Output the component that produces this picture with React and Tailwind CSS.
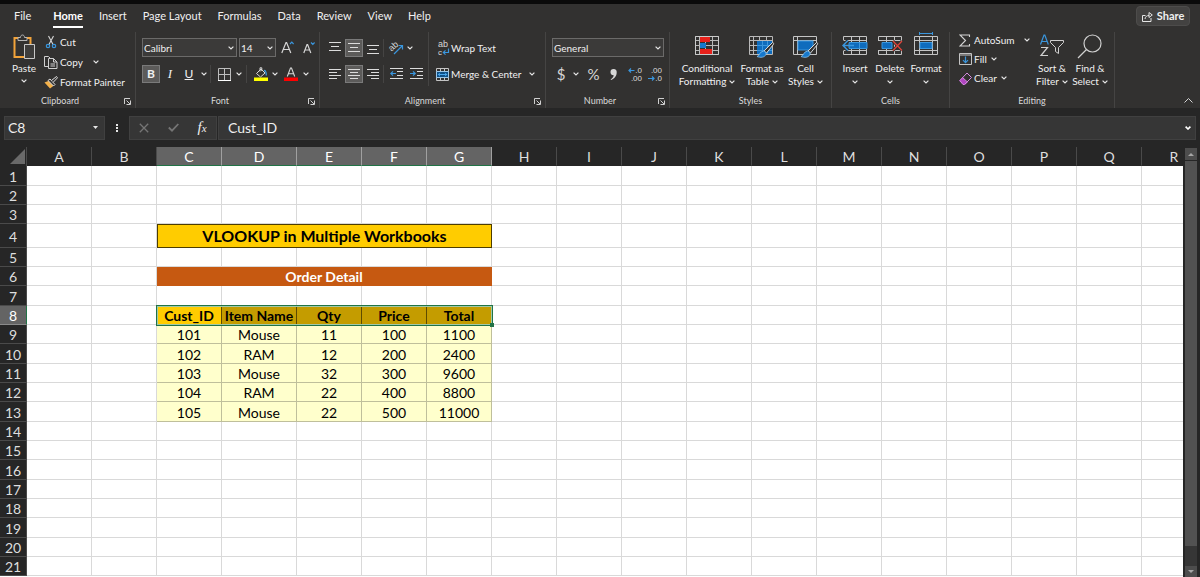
import clsx from 'clsx';

const tabs = ['File', 'Home', 'Insert', 'Page Layout', 'Formulas', 'Data', 'Review', 'View', 'Help'];

const columns = 'ABCDEFGHIJKLMNOPQR'.split('');
const rows = Array.from({ length: 21 }, (_, i) => i + 1);
const selectedColumns = ['C', 'D', 'E', 'F', 'G'];

const headings = ['Cust_ID', 'Item Name', 'Qty', 'Price', 'Total'];
const orders = [
  [101, 'Mouse', 11, 100, 1100],
  [102, 'RAM', 12, 200, 2400],
  [103, 'Mouse', 32, 300, 9600],
  [104, 'RAM', 22, 400, 8800],
  [105, 'Mouse', 22, 500, 11000],
];

/* ---------- icons ---------- */

const Chevron = ({ className }) => (
  <svg viewBox="0 0 6 4" className={clsx('h-1 w-1.5 shrink-0', className)} fill="none" stroke="#e6e6e6" strokeWidth="1.2">
    <path d="M.6.6 3 3 5.4.6" />
  </svg>
);

const Launcher = () => (
  <svg viewBox="0 0 7 7" className="h-[7px] w-[7px]" fill="none" stroke="#d0d0d0">
    <path d="M.5 6V.5H6M2.5 2.5l3.5 3.5M6.5 2.5v4h-4" />
  </svg>
);

const PasteIcon = () => (
  <svg viewBox="0 0 24 26" className="h-[26px] w-6" fill="none">
    <path d="M6 4H2.500v19H12M15 4h3.500v6" stroke="#f2a33a" strokeWidth="2" />
    <path d="M6 6.500V3.500h2.500C8.500 1.800 9.500 1 10.500 1s2 .8 2 2.500H15v3z" fill="#323130" stroke="#b5b5b5" />
    <path d="M12.500 10.500h10v14h-10z" fill="#3d3c3b" stroke="#c8c8c8" />
  </svg>
);

const CutIcon = () => (
  <svg viewBox="0 0 14 14" className="h-3.5 w-3.5" fill="none">
    <path d="M4.500 1l4.800 9M9.500 1L4.700 10" stroke="#d6d6d6" strokeWidth="1.100" />
    <circle cx="4" cy="11" r="1.700" stroke="#3a96dd" strokeWidth="1.200" />
    <circle cx="10" cy="11" r="1.700" stroke="#3a96dd" strokeWidth="1.200" />
  </svg>
);

const CopyIcon = () => (
  <svg viewBox="0 0 14 14" className="h-3.5 w-3.5" fill="none" stroke="#d0d0d0">
    <path d="M4.500 11.500h-4V1.500h4l2 2M4.500 3.500h5l3.500 3.500v6.500H4.500zM9.500 3.500V7H13M6.500 9h4.500M6.500 11h4.500" />
  </svg>
);

const PainterIcon = () => (
  <svg viewBox="0 0 14 13" className="h-[13px] w-3.5">
    <path d="M.5 6.500l5-2 4.500 5-4 3z" fill="#f2b04a" />
    <path d="M4 4.500l2-1.500 5 5.500-1.500 1.500z" fill="#323130" stroke="#dedede" />
    <path d="M7.500 4.500L12.500.5l1 1.300-4.300 4.500" fill="#323130" stroke="#dedede" />
  </svg>
);

const BordersIcon = () => (
  <svg viewBox="0 0 13 13" className="h-[13px] w-[13px]" fill="none">
    <path d="M.5.5h12v12M.5.5v12M6.500 1v11M1 6.500h11" stroke="#bdbdbd" />
    <path d="M0 12.500h13" stroke="#fff" />
  </svg>
);

const FillColorIcon = () => (
  <svg viewBox="0 0 14 14" className="h-3.5 w-3.5" fill="none">
    <path d="M2.500 6.500L7 2l4 4-4.500 4zM6 4.500V.8h1.800V4" stroke="#d6d6d6" />
    <path d="M10 3.500c1.500 0 2.300 1.500 2.300 5" stroke="#3a96dd" strokeWidth="1.300" />
    <path d="M0 10.500h14V14H0z" fill="#ffff00" />
  </svg>
);

const FontColorIcon = () => (
  <svg viewBox="0 0 14 14" className="h-3.5 w-3.5" fill="none">
    <path d="M3.300 9.500L6.500 1h1l3.200 8.500M4.500 6.700h5" stroke="#d6d6d6" strokeWidth="1.100" />
    <path d="M0 10.500h14V14H0z" fill="#f00" />
  </svg>
);

const FontSizeIcon = ({ grow }) => (
  <svg viewBox="0 0 13 13" className="h-[13px] w-[13px]" fill="none">
    <path
      d={grow ? 'M.8 12L5 1.500h.6L9.800 12M2.300 8.500h6' : 'M1.800 12L5 3.500h.6L8.800 12M3 9h4.600'}
      stroke="#d6d6d6"
      strokeWidth="1.200"
    />
    <path d={grow ? 'M9 3l1.800-1.800L12.600 3' : 'M9 1.500l1.800 1.800 1.800-1.800'} stroke="#3a96dd" strokeWidth="1.200" />
  </svg>
);

const linePaths = {
  top: 'M0 1.500h12M2 5.500h8M0 9.500h12',
  middle: 'M0 2.500h12M2 6.500h8M0 10.500h12',
  bottom: 'M0 4.500h12M2 8.500h8M0 12.500h12',
  left: 'M0 1.500h12M0 4.500h8M0 7.500h12M0 10.500h8',
  center: 'M0 1.500h12M2 4.500h8M0 7.500h12M2 10.500h8',
  right: 'M0 1.500h12M4 4.500h8M0 7.500h12M4 10.500h8',
};

const LinesIcon = ({ type }) => (
  <svg viewBox="0 0 12 13" className="h-[13px] w-3" fill="none" stroke="#dcdcdc">
    <path d={linePaths[type]} />
  </svg>
);

const IndentIcon = ({ out }) => (
  <svg viewBox="0 0 13 12" className="h-3 w-[13px]" fill="none">
    <path d="M0 .5h13M7 3.500h6M7 7.500h6M0 10.500h13" stroke="#dcdcdc" />
    <path d={out ? 'M6 5.500H.8M3 3.300L.8 5.500 3 7.700' : 'M0 5.500h5.200M3 3.300l2.200 2.200L3 7.700'} stroke="#3a96dd" strokeWidth="1.200" />
  </svg>
);

const OrientationIcon = () => (
  <svg viewBox="0 0 15 14" className="h-3.5 w-[15px] overflow-visible" fill="none">
    <text x="0" y="8" transform="rotate(-42 5 6)" fontSize="9" fill="#d6d6d6" fontFamily="Liberation Sans, sans-serif">ab</text>
    <path d="M5 13L13 5M9.500 4.500H13.500V8.500" stroke="#3a96dd" strokeWidth="1.200" />
  </svg>
);

const WrapIcon = () => (
  <svg viewBox="0 0 13 16" className="h-4 w-[13px] overflow-visible" fill="none">
    <text x="2" y="7" fontSize="9" fill="#d6d6d6" fontFamily="Liberation Sans, sans-serif">ab</text>
    <text x="2" y="15" fontSize="8" fill="#d6d6d6" fontFamily="Liberation Sans, sans-serif">c</text>
    <path d="M12.500 8.500v4H7.500M9.500 10.300l-2.200 2.200 2.200 2.200" stroke="#3a96dd" strokeWidth="1.200" />
  </svg>
);

const MergeIcon = () => (
  <svg viewBox="0 0 13 13" className="h-[13px] w-[13px]" fill="none">
    <path d="M.5.5h12v12H.5zM4.500 1v2M8.500 1v2M4.500 10v2M8.500 10v2" stroke="#c4c4c4" />
    <path d="M.5 3.500h12v6H.5z" fill="#0d4f86" stroke="#9cc7e8" />
    <path d="M2 6.500h9M4 4.800L2.300 6.500 4 8.200M9 4.800l1.700 1.700L9 8.200" stroke="#4aa8ee" />
  </svg>
);

const DecimalIcon = ({ more }) => (
  <svg viewBox="0 0 14 15" className="h-[15px] w-3.5 overflow-visible" fill="#dcdcdc">
    <text x="14" y="6" textAnchor="end" fontSize="8" fontFamily="Liberation Sans, sans-serif">{more ? '.0' : '.00'}</text>
    <text x="14" y="14" textAnchor="end" fontSize="8" fontFamily="Liberation Sans, sans-serif">{more ? '.00' : '.0'}</text>
    <path
      d={more ? 'M6.500 3.500H1M3 1.500l-2 2 2 2' : 'M0 11.500h6M4 9.500l2 2-2 2'}
      fill="none"
      stroke="#3a96dd"
      strokeWidth="1.200"
    />
  </svg>
);

const TableGrid = () => (
  <path d="M.5 2.500h23v18H.5zM4.500 3v17M10.500 3v17M17.500 3v17M1 6.500h22M1 11.500h22M1 16.500h22" stroke="#b9b9b9" fill="none" />
);

const Brush = () => (
  <g>
    <path d="M23.500 8.500c1.500.3 1.300 1.300.5 2.500l-6.500 8-2.500-2z" fill="#323130" stroke="#d6d6d6" />
    <path d="M14.500 17c2 .3 3 1.500 2.500 3.500-1.500 3-5.500 3.500-9 2 2.500-.5 2.500-5 6.500-5.500z" fill="#1678cc" stroke="#8cc4ee" strokeWidth=".8" />
  </g>
);

const ConditionalIcon = () => (
  <svg viewBox="0 0 24 24" className="h-6 w-6">
    <TableGrid />
    <path d="M5 3h10v5H5zM5 15h12v5H5z" fill="#e8201a" />
    <path d="M5 9h6v5H5z" fill="#1678cc" />
    <path d="M.5 2.500h23v18H.5z" stroke="#c9c9c9" fill="none" />
  </svg>
);

const FormatTableIcon = () => (
  <svg viewBox="0 0 26 24" className="h-6 w-[26px]">
    <TableGrid />
    <path d="M8 7h15v13H8z" fill="#0f6cbd" />
    <path d="M8 11.500h15M8 16.500h15M13.500 7v13M18.500 7v13" stroke="#3a96dd" />
    <Brush />
  </svg>
);

const CellStylesIcon = () => (
  <svg viewBox="0 0 26 24" className="h-6 w-[26px]">
    <path d="M.5 2.500h23v18H.5zM4.500 3v17M1 6.500h22" stroke="#c4c4c4" fill="none" />
    <path d="M5 7h15v9H5z" fill="#0f6cbd" stroke="#3a96dd" />
    <Brush />
  </svg>
);

const InsertIcon = () => (
  <svg viewBox="0 0 26 24" className="h-6 w-[26px]" fill="none">
    <path d="M1.500 6.500v-4h23v18h-23v-4M9.500 3v17M17.500 3v17M2 6.500h22M2 16.500h22" stroke="#c4c4c4" />
    <path d="M7 8.500h18v6H7z" fill="#0f6cbd" stroke="#3a96dd" />
    <path d="M17.500 8v7" stroke="#3a96dd" />
    <path d="M6 6.500l-5 5 5 5" stroke="#323130" strokeWidth="3.500" />
    <path d="M12 11.500H1M6 6.500l-5 5 5 5" stroke="#3a96dd" strokeWidth="1.500" />
  </svg>
);

const DeleteIcon = () => (
  <svg viewBox="0 0 26 24" className="h-6 w-[26px]" fill="none">
    <path d="M1.500 6.500v-4h23v4M1.500 16.500v4h23v-4M9.500 3v17M17.500 3v17M1 6.500h24M1 16.500h24" stroke="#c4c4c4" />
    <path d="M5 8.500h10v6H5z" fill="#0f6cbd" stroke="#3a96dd" />
    <path d="M16 7l9 9.500M25 7l-9 9.500" stroke="#323130" strokeWidth="3" />
    <path d="M16 7l9 9.500M25 7l-9 9.500" stroke="#e0433a" strokeWidth="1.200" />
  </svg>
);

const FormatIcon = () => (
  <svg viewBox="0 0 26 24" className="h-6 w-[26px] overflow-visible" fill="none">
    <path d="M1.500 2.500h23v18h-23zM6.500 3v17M19.500 3v17M2 6.500h22M2 16.500h22" stroke="#c4c4c4" />
    <path d="M7 8.500h12v6H7z" fill="#0f6cbd" stroke="#3a96dd" />
    <path d="M6.500-.5h13M6.500-2v3M19.500-2v3" stroke="#3a96dd" />
  </svg>
);

const SumIcon = () => (
  <svg viewBox="0 0 12 13" className="h-[13px] w-3" fill="none" stroke="#d6d6d6" strokeWidth="1.100">
    <path d="M10.500 3V1H1l5.500 5.500L1 12h9.500v-2" />
  </svg>
);

const FillDownIcon = () => (
  <svg viewBox="0 0 13 12" className="h-3 w-[13px]" fill="none">
    <path d="M.5.5h12v11H.5zM1 2h11" stroke="#c4c4c4" />
    <path d="M6.500 3.500v6M4 7.200l2.500 2.500L9 7.200" stroke="#3a96dd" strokeWidth="1.200" />
  </svg>
);

const ClearIcon = () => (
  <svg viewBox="0 0 13 13" className="h-[13px] w-[13px]" fill="none">
    <path d="M3.500 5.500l5 5-2 2H4L.8 9.200v-1z" fill="#b146c2" />
    <path d="M.8 8.500L8 1l4.500 4.500-7 7H4zM3.500 5.500l5 4.500" stroke="#d58ae0" />
  </svg>
);

const SortIcon = () => (
  <svg viewBox="0 0 26 24" className="h-6 w-[26px]" fill="none">
    <path d="M1.500 10.500L5 1h.8l3.500 9.500M2.800 7.500H8" stroke="#3a96dd" strokeWidth="1.200" />
    <path d="M2 13.500h6.500L2 21.500h7" stroke="#d0d0d0" strokeWidth="1.200" />
    <path d="M11.500 6.500h13v2l-5 5v6l-3-2v-4l-5-5z" stroke="#d0d0d0" />
  </svg>
);

const FindIcon = () => (
  <svg viewBox="0 0 26 26" className="h-[26px] w-[26px]" fill="none" stroke="#d0d0d0" strokeWidth="1.200">
    <circle cx="15.500" cy="9.500" r="8.500" />
    <path d="M9.500 15.500L1 24" />
  </svg>
);

const ShareIcon = () => (
  <svg viewBox="0 0 11 11" className="h-[11px] w-[11px]" fill="none" stroke="#e6e6e6">
    <path d="M3.500 4.500h-3v6h8.500V7M3 8c.3-2.500 2-3.500 4-3.500M7 1.500v5L10.300 4z" />
  </svg>
);

/* ---------- ribbon parts ---------- */

const Group = ({ title, launcher, className, children }) => (
  <section aria-label={title} className={clsx('flex shrink-0 flex-col border-r border-[#454443]', className)}>
    <div className="flex h-[62px] items-start">{children}</div>
    <footer className="flex h-3.5 items-center">
      <span className="flex-1 text-center text-[9px] leading-3 text-[#dadada]">{title}</span>
      {launcher && (
        <button aria-label={`${title} settings`} className="mx-1">
          <Launcher />
        </button>
      )}
    </footer>
  </section>
);

const IconButton = ({ label, active, className, children }) => (
  <button
    aria-label={label}
    className={clsx(
      'flex h-[18px] shrink-0 items-center justify-center',
      active && 'border border-[#7a7a7a] bg-[#5c5b5a]',
      className
    )}
  >
    {children}
  </button>
);

const Divider = () => <span className="h-[18px] w-px shrink-0 bg-[#454443]" />;

const Dropdown = ({ label, value, className }) => (
  <label className={clsx('grid h-[19px] shrink-0 items-center border border-[#6b6a69] bg-[#3b3a39]', className)}>
    <select
      aria-label={label}
      className="col-start-1 row-start-1 w-full appearance-none bg-transparent pl-px text-[10px] leading-4 text-[#f0f0f0] outline-none"
    >
      <option>{value}</option>
    </select>
    <Chevron className="pointer-events-none col-start-1 row-start-1 mr-0.5 justify-self-end" />
  </label>
);

// Large button: icon on top, caption in two lines
const BigButton = ({ icon, lines, className }) => (
  <button className={clsx('flex shrink-0 flex-col items-center pt-0.5 text-[10px] leading-[13px]', className)}>
    <span className="flex h-7 items-start">{icon}</span>
    <span className="whitespace-nowrap">{lines[0]}</span>
    <span className="flex h-[13px] items-center gap-[3px] whitespace-nowrap">
      {lines[1]}
      <Chevron />
    </span>
  </button>
);

const TextButton = ({ icon, label, chevron, className }) => (
  <button className={clsx('flex items-center gap-0.5 whitespace-nowrap text-[10px] leading-4', className)}>
    <span className="flex w-3.5 justify-center">{icon}</span>
    {label}
    {chevron && <Chevron className={chevron} />}
  </button>
);

const Ribbon = () => (
  <div className="flex h-[76px]">
    <Group title="Clipboard" launcher className="w-[136px]">
      <button className="ml-3 flex w-6 flex-col items-center pt-0.5 text-[10px] leading-[13px]">
        <span className="flex h-7 items-start"><PasteIcon /></span>
        Paste
        <Chevron className="mt-1" />
      </button>
      <div className="ml-2 flex flex-col gap-1 pt-0.5">
        <TextButton icon={<CutIcon />} label="Cut" />
        <TextButton icon={<CopyIcon />} label="Copy" chevron="ml-2" />
        <TextButton icon={<PainterIcon />} label="Format Painter" />
      </div>
    </Group>

    <Group title="Font" launcher className="w-[184px]">
      <div className="flex flex-col gap-2 pl-1.5 pt-1.5">
        <div className="flex items-center">
          <Dropdown label="Font name" value="Calibri" className="w-[95px]" />
          <Dropdown label="Font size" value="14" className="ml-0.5 w-[37px]" />
          <IconButton label="Increase font size" className="ml-1 w-[15px]"><FontSizeIcon grow /></IconButton>
          <IconButton label="Decrease font size" className="ml-1.5 w-[15px]"><FontSizeIcon /></IconButton>
        </div>
        <div className="flex items-center">
          <IconButton label="Bold" active className="w-[18px] text-[12px] font-bold">B</IconButton>
          <IconButton label="Italic" className="w-5 font-['Liberation_Serif',serif] text-[13px] italic">I</IconButton>
          <IconButton label="Underline" className="w-[18px] text-[12px] underline">U</IconButton>
          <IconButton label="Underline style" className="w-3"><Chevron /></IconButton>
          <Divider />
          <IconButton label="Borders" className="ml-1.5 w-[15px]"><BordersIcon /></IconButton>
          <IconButton label="Border style" className="w-3.5"><Chevron /></IconButton>
          <Divider />
          <IconButton label="Fill color" className="ml-1.5 w-[15px]"><FillColorIcon /></IconButton>
          <IconButton label="Fill color options" className="w-3.5"><Chevron /></IconButton>
          <IconButton label="Font color" className="w-[18px]"><FontColorIcon /></IconButton>
          <IconButton label="Font color options" className="w-3"><Chevron /></IconButton>
        </div>
      </div>
    </Group>

    <Group title="Alignment" launcher className="w-[226px]">
      <div className="flex flex-col gap-2 pl-[5px] pt-1.5">
        <div className="flex h-[19px] items-center">
          <IconButton label="Top align" className="w-5"><LinesIcon type="top" /></IconButton>
          <IconButton label="Middle align" active className="w-[18px]"><LinesIcon type="middle" /></IconButton>
          <IconButton label="Bottom align" className="w-5"><LinesIcon type="bottom" /></IconButton>
          <Divider />
          <IconButton label="Orientation" className="ml-1 w-4"><OrientationIcon /></IconButton>
          <IconButton label="Orientation options" className="w-3"><Chevron /></IconButton>
        </div>
        <div className="flex items-center">
          <IconButton label="Align left" className="w-5"><LinesIcon type="left" /></IconButton>
          <IconButton label="Center" active className="w-[18px]"><LinesIcon type="center" /></IconButton>
          <IconButton label="Align right" className="w-5"><LinesIcon type="right" /></IconButton>
          <Divider />
          <IconButton label="Decrease indent" className="ml-1 w-4"><IndentIcon out /></IconButton>
          <IconButton label="Increase indent" className="ml-1 w-4"><IndentIcon /></IconButton>
        </div>
      </div>
      <div className="ml-1 flex h-[54px] flex-col gap-2.5 border-l border-[#454443] pl-1.5 pt-2">
        <TextButton icon={<WrapIcon />} label="Wrap Text" />
        <TextButton icon={<MergeIcon />} label="Merge & Center" chevron="ml-1.5" />
      </div>
    </Group>

    <Group title="Number" launcher className="w-[124px]">
      <div className="flex flex-col gap-2 pl-1.5 pt-1.5">
        <Dropdown label="Number format" value="General" className="w-[112px]" />
        <div className="flex items-center text-[#d6d6d6]">
          <IconButton label="Currency" className="w-[18px] text-[15px]">$</IconButton>
          <IconButton label="Currency options" className="w-3"><Chevron /></IconButton>
          <IconButton label="Percent style" className="ml-1 w-[15px] text-[15px]">%</IconButton>
          <IconButton label="Comma style" className="ml-1 w-4">
            <svg viewBox="0 0 7 11" className="h-[11px] w-[7px]" fill="#d6d6d6">
              <path d="M3.500 0a3 3 0 0 1 3.200 3.200C6.700 7 4.500 9.800 1 11l-.3-.8C2.500 9.300 3.500 8 3.700 6.200A3.100 3.100 0 1 1 3.500 0z" />
            </svg>
          </IconButton>
          <span className="ml-0.5"><Divider /></span>
          <IconButton label="Increase decimal" className="ml-1 w-4"><DecimalIcon more /></IconButton>
          <IconButton label="Decrease decimal" className="ml-1 w-4"><DecimalIcon /></IconButton>
        </div>
      </div>
    </Group>

    <Group title="Styles" className="w-[162px]">
      <BigButton icon={<ConditionalIcon />} lines={['Conditional', 'Formatting']} className="ml-2 w-[58px]" />
      <BigButton icon={<FormatTableIcon />} lines={['Format as', 'Table']} className="w-[52px]" />
      <BigButton icon={<CellStylesIcon />} lines={['Cell', 'Styles']} className="w-[35px]" />
    </Group>

    <Group title="Cells" className="w-[118px]">
      <BigButton icon={<InsertIcon />} lines={['Insert', '']} className="ml-1.5 w-[34px]" />
      <BigButton icon={<DeleteIcon />} lines={['Delete', '']} className="w-9" />
      <BigButton icon={<FormatIcon />} lines={['Format', '']} className="w-9" />
    </Group>

    <Group title="Editing" className="w-[165px]">
      <div className="ml-2 flex w-[78px] flex-col gap-[3px]">
        <TextButton icon={<SumIcon />} label="AutoSum" chevron="ml-2" />
        <TextButton icon={<FillDownIcon />} label="Fill" chevron="ml-0.5" />
        <TextButton icon={<ClearIcon />} label="Clear" chevron="ml-0.5" />
      </div>
      <BigButton icon={<SortIcon />} lines={['Sort &', 'Filter']} className="w-8" />
      <BigButton icon={<FindIcon />} lines={['Find &', 'Select']} className="ml-1 w-9" />
    </Group>

    <button aria-label="Collapse ribbon" className="ml-auto mr-[7px] self-end pb-[5px]">
      <svg viewBox="0 0 9 5" className="h-[5px] w-[9px]" fill="none" stroke="#d6d6d6">
        <path d="M.5 4.500l4-4 4 4" />
      </svg>
    </button>
  </div>
);

const FormulaBar = () => (
  <div className="flex h-[39px] items-center bg-[#262626] pl-1 pr-1 text-[14px] text-[#f0f0f0]">
    <div className="flex h-6 w-[101px] items-center border border-[#404040] bg-[#363636] pl-[3px] pr-1.5">
      <input aria-label="Name box" defaultValue="C8" className="w-full min-w-0 bg-transparent outline-none" />
      <svg viewBox="0 0 5 3" className="h-[3px] w-[5px] shrink-0" fill="#e6e6e6"><path d="M0 0h5L2.500 3z" /></svg>
    </div>
    <svg viewBox="0 0 2 8" className="mx-[11px] h-2 w-0.5" fill="#e6e6e6">
      <path d="M0 0h2v2H0zM0 3h2v2H0zM0 6h2v2H0z" />
    </svg>
    <div className="flex h-6 w-[88px] items-center justify-around border border-[#404040] bg-[#363636]">
      <button aria-label="Cancel">
        <svg viewBox="0 0 10 10" className="h-2.5 w-2.5" stroke="#757575" strokeWidth="1.300"><path d="M.8.8l8.400 8.400M9.200.8L.8 9.200" /></svg>
      </button>
      <button aria-label="Enter">
        <svg viewBox="0 0 11 9" className="h-[9px] w-[11px]" fill="none" stroke="#757575" strokeWidth="1.800"><path d="M.8 4.500L4 7.700 10.300 1" /></svg>
      </button>
      <button aria-label="Insert function" className="font-['Liberation_Serif',serif] text-[15px] italic leading-5">
        f<span className="text-[11px]">x</span>
      </button>
    </div>
    <div className="ml-px flex h-6 flex-1 items-center border border-[#404040] bg-[#363636] pl-[9px] pr-1">
      <input aria-label="Formula" defaultValue="Cust_ID" className="w-full min-w-0 bg-transparent outline-none" />
      <svg viewBox="0 0 6 4" className="h-1 w-1.5 shrink-0" fill="none" stroke="#fff" strokeWidth="1.600"><path d="M.6.6L3 3 5.400.6" /></svg>
    </div>
  </div>
);

/* ---------- sheet ---------- */

const EmptyCells = ({ from, to }) =>
  columns.slice(from, to).map((c) => <td key={c} className="border-b border-r border-[#d9d9d9]" />);

const RowCells = ({ row }) => {
  if (row === 4) {
    return (
      <td colSpan={5} className="border border-[#4d3d00] bg-[#ffcc00] text-[16px] font-bold leading-5">
        VLOOKUP in Multiple Workbooks
      </td>
    );
  }
  if (row === 6) {
    return <td colSpan={5} className="border-r border-[#c65911] bg-[#c65911] font-bold text-white">Order Detail</td>;
  }
  if (row === 8) {
    return headings.map((h, i) => (
      <th
        key={h}
        scope="col"
        className={clsx(
          'relative whitespace-nowrap border-r border-[#5e4b00] font-bold',
          i === 0 ? 'bg-[#ffcc00]' : 'bg-[#c49c00]'
        )}
      >
        {h}
        {i === 0 && (
          <span className="absolute -left-px -top-px z-10 h-[21px] w-[337px] border border-[#217346] ring-1 ring-inset ring-[#9fc9a8]">
            <span className="absolute -bottom-0.5 -right-0.5 size-1 bg-[#217346]" />
          </span>
        )}
      </th>
    ));
  }
  if (row >= 9 && row <= 13) {
    return orders[row - 9].map((value, i) => (
      <td key={i} className="border-b border-r border-[#bfbf9b] bg-[#ffffcc] pt-0.5">{value}</td>
    ));
  }
  return <EmptyCells from={2} to={7} />;
};

const rowHeight = (row) => {
  if (row === 4) return 'h-6';
  return row % 3 === 1 ? 'h-5' : 'h-[19px]';
};

const Sheet = () => (
  <div className="min-w-0 flex-1 overflow-hidden bg-white">
    <table className="w-[1207px] table-fixed border-separate border-spacing-0 text-center text-[14px] leading-4 text-black">
      <colgroup>
        <col className="w-[27px]" />
        {columns.map((c) => (
          <col key={c} className={c === 'D' ? 'w-[75px]' : 'w-[65px]'} />
        ))}
      </colgroup>
      <thead>
        <tr className="h-[19px] bg-[#262626] text-[#dedede]">
          <th aria-label="Select all" className="border-r border-[#4a4a4a] p-0">
            <svg viewBox="0 0 15 15" className="ml-auto mr-px h-[15px] w-[15px]" fill="#6a6a6a"><path d="M15 0v15H0z" /></svg>
          </th>
          {columns.map((c) => (
            <th
              key={c}
              scope="col"
              className={clsx(
                'border-b border-r pt-0.5 font-normal',
                selectedColumns.includes(c)
                  ? 'border-b-[#217346] border-r-[#a0a0a0] bg-[#646464] text-white'
                  : 'border-b-[#262626] border-r-[#4a4a4a]'
              )}
            >
              {c}
            </th>
          ))}
        </tr>
      </thead>
      <tbody>
        {rows.map((row) => (
          <tr key={row} className={rowHeight(row)}>
            <th
              scope="row"
              className={clsx(
                'border-b border-r pt-0.5 font-normal',
                row === 8
                  ? 'border-b-[#8a8a8a] border-r-[#217346] bg-[#646464] text-white'
                  : 'border-b-[#4a4a4a] border-r-[#4a4a4a] bg-[#262626] text-[#dedede]'
              )}
            >
              {row}
            </th>
            <EmptyCells from={0} to={2} />
            <RowCells row={row} />
            <EmptyCells from={7} />
          </tr>
        ))}
      </tbody>
    </table>
  </div>
);

const ScrollBar = () => (
  <div className="flex w-[17px] shrink-0 flex-col bg-[#262626] pl-0.5 pr-[3px] pt-px">
    <button aria-label="Scroll up" className="flex h-3 items-center justify-center bg-[#4d4d4d]">
      <svg viewBox="0 0 6 3" className="h-[3px] w-1.5" fill="#a6a6a6"><path d="M0 3h6L3 0z" /></svg>
    </button>
    <div className="mt-px flex-1 bg-[#525252]" />
    <div className="h-5 bg-[#363636]" />
    <button aria-label="Scroll down" className="flex h-[11px] items-center justify-center bg-[#4d4d4d]">
      <svg viewBox="0 0 6 3" className="h-[3px] w-1.5" fill="#a6a6a6"><path d="M0 0h6L3 3z" /></svg>
    </button>
  </div>
);

const App = () => {
  return (
    <div className="flex h-screen flex-col overflow-hidden bg-[#262626] font-[Lato,sans-serif] text-[#f0f0f0]">
      <header className="border-t-4 border-[#0a0a0a] bg-[#323130]">
        <nav className="flex h-7 items-start pl-3.5">
          {tabs.map((tab) => (
            <a
              key={tab}
              href="#"
              className={clsx(
                'border-b-2 pb-0.5 pt-1 text-[11px] leading-4',
                tab === 'Home' ? 'border-white font-bold text-white' : 'border-transparent',
                tab === 'File' ? 'mr-[22px]' : 'mr-4'
              )}
            >
              {tab}
            </a>
          ))}
          <button className="ml-auto mr-2.5 mt-0.5 flex h-5 w-[54px] items-center justify-center gap-1 rounded-sm border border-[#4d4c4b] bg-[#434241] text-[11px] font-bold">
            <ShareIcon />
            Share
          </button>
        </nav>
        <Ribbon />
      </header>
      <FormulaBar />
      <main className="flex min-h-0 flex-1">
        <Sheet />
        <ScrollBar />
      </main>
    </div>
  );
};

export default App;
